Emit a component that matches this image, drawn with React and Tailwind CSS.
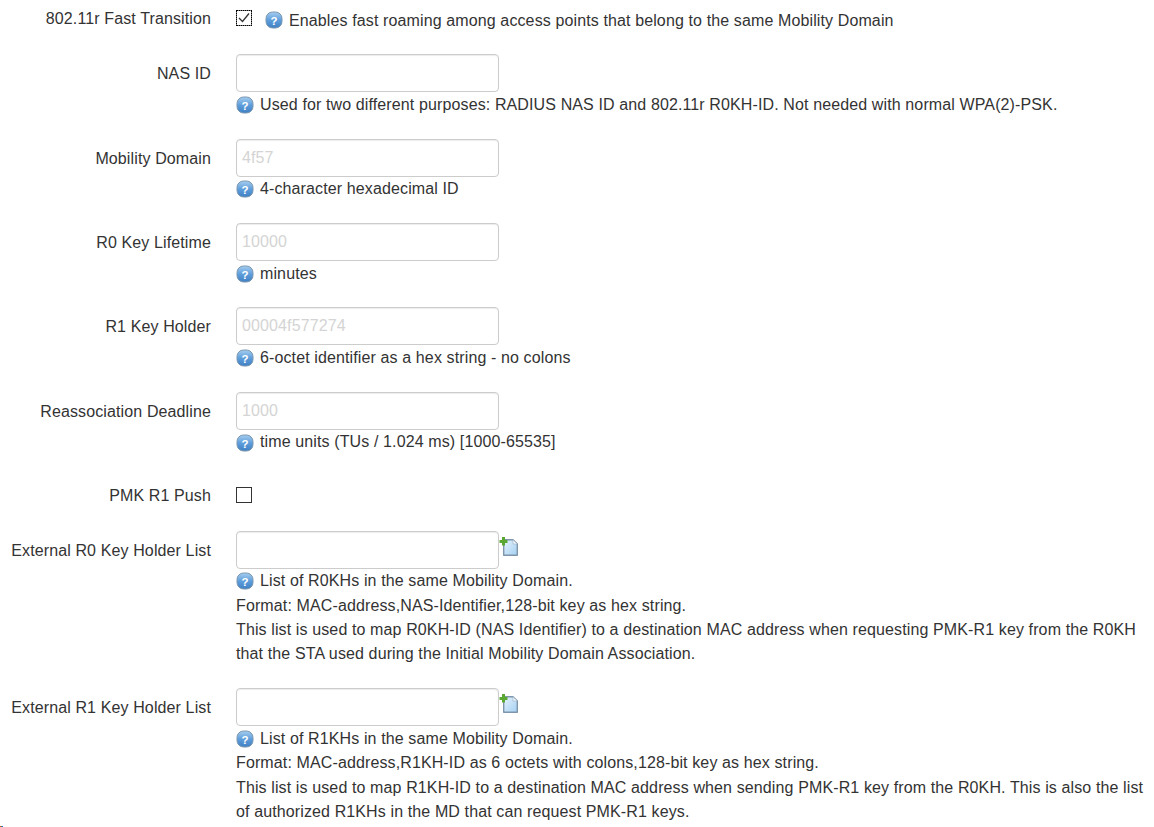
const Help = ({ className = "" }) => (
  <svg viewBox="0 0 18 18" className={`w-[18px] h-[18px] shrink-0 ${className}`}>
    <defs>
      <linearGradient id="hg" x1="0" y1="0" x2="0" y2="1">
        <stop offset="0" stopColor="#a5cdf0" />
        <stop offset="0.5" stopColor="#5f9edb" />
        <stop offset="1" stopColor="#3f80c4" />
      </linearGradient>
    </defs>
    <rect x="1" y="1" width="16" height="16" rx="6.5" fill="url(#hg)" stroke="#7b97b0" strokeWidth="1" />
    <text x="9" y="13.5" textAnchor="middle" fontSize="11.5" fontWeight="700" fill="#fff" fontFamily="Liberation Sans, sans-serif">?</text>
  </svg>
);

const AddIcon = () => (
  <svg viewBox="0 0 20 20" className="w-5 h-5 shrink-0 mt-[6px]">
    <defs>
      <linearGradient id="ag" x1="0" y1="0" x2="1" y2="1">
        <stop offset="0" stopColor="#e6f3fd" />
        <stop offset="1" stopColor="#a4d0f2" />
      </linearGradient>
    </defs>
    <path d="M4.7 2.7H14L18.3 7V18.3H4.7Z" fill="url(#ag)" stroke="#7e95aa" strokeWidth="1.4" strokeLinejoin="round" />
    <path d="M14 2.7V7H18.3Z" fill="#f4faff" stroke="#9ab0c3" strokeWidth="0.6" />
    <path d="M3 0H6V3H8.5V6H6V8.5H3V6H0.5V3H3Z" fill="#5aa832" />
  </svg>
);

const Input = ({ placeholder }) => (
  <input
    readOnly
    placeholder={placeholder}
    className="block w-[263px] h-[38px] px-[5px] rounded-[4px] border border-[#cccccc] bg-white shadow-[inset_0_1px_1px_rgba(0,0,0,0.075)] outline-none placeholder:text-[#d4d4d4]"
  />
);

const Checkbox = ({ checked, focused }) => (
  <span className={`flex items-center justify-center w-4 h-4 bg-white border ${focused ? "border-[#777] outline outline-dotted outline-black -outline-offset-1" : "border-[#333]"}`}>
    {checked && (
      <svg viewBox="0 0 14 14" className="w-[14px] h-[14px]">
        <path d="M2 7L5.5 10.5L12 2.5" fill="none" stroke="#333" strokeWidth="1.3" />
      </svg>
    )}
  </span>
);

const Label = ({ children, className = "" }) => (
  <div className={`w-[211px] shrink-0 text-right ${className}`}>{children}</div>
);

const Hint = ({ lines }) => (
  <div>
    {lines.map((l, i) => (
      <div key={l} className="flex items-center h-[24.48px] pt-[1.08px] whitespace-nowrap">
        {i === 0 && <Help className="mr-[6px]" />}
        {l}
      </div>
    ))}
  </div>
);

const Field = ({ label, placeholder, hint, add }) => (
  <div className="flex gap-[25px] mb-[22px]">
    <Label className="h-[38px] leading-[39.08px]">{label}</Label>
    <div>
      <div className="flex">
        <Input placeholder={placeholder} />
        {add && <AddIcon />}
      </div>
      <Hint lines={hint} />
    </div>
  </div>
);

export default function App() {
  return (
    <div className="relative w-[1154px] h-[827px] overflow-hidden bg-white text-[#333333] text-[16px] tracking-[0.12px] leading-[24.48px] font-['Liberation_Sans',Arial,sans-serif]">
      <div className="flex gap-[25px] h-[32.06px] mb-[22px]">
        <Label className="pt-[7px]">802.11r Fast Transition</Label>
        <div className="flex items-center h-[20px] mt-[10px]">
          <span className="self-start"><Checkbox checked focused /></span>
          <Help className="ml-[13px] mr-[6px]" />
          <span className="pt-[2px]">Enables fast roaming among access points that belong to the same Mobility Domain</span>
        </div>
      </div>
      <Field label="NAS ID" hint={["Used for two different purposes: RADIUS NAS ID and 802.11r R0KH-ID. Not needed with normal WPA(2)-PSK."]} />
      <Field label="Mobility Domain" placeholder="4f57" hint={["4-character hexadecimal ID"]} />
      <Field label="R0 Key Lifetime" placeholder="10000" hint={["minutes"]} />
      <Field label="R1 Key Holder" placeholder="00004f577274" hint={["6-octet identifier as a hex string - no colons"]} />
      <Field label="Reassociation Deadline" placeholder="1000" hint={["time units (TUs / 1.024 ms) [1000-65535]"]} />
      <div className="flex gap-[25px] h-[32.16px] mb-[22px]">
        <Label className="pt-[8px]">PMK R1 Push</Label>
        <div className="mt-[10.5px]"><Checkbox /></div>
      </div>
      <Field
        label="External R0 Key Holder List"
        add
        hint={[
          "List of R0KHs in the same Mobility Domain.",
          "Format: MAC-address,NAS-Identifier,128-bit key as hex string.",
          "This list is used to map R0KH-ID (NAS Identifier) to a destination MAC address when requesting PMK-R1 key from the R0KH",
          "that the STA used during the Initial Mobility Domain Association.",
        ]}
      />
      <Field
        label="External R1 Key Holder List"
        add
        hint={[
          "List of R1KHs in the same Mobility Domain.",
          "Format: MAC-address,R1KH-ID as 6 octets with colons,128-bit key as hex string.",
          "This list is used to map R1KH-ID to a destination MAC address when sending PMK-R1 key from the R0KH. This is also the list",
          "of authorized R1KHs in the MD that can request PMK-R1 keys.",
        ]}
      />
      <div className="absolute left-0 bottom-0 flex h-px">
        <span className="w-px bg-[#e23b3b]" />
        <span className="w-px bg-[#3aa53a]" />
        <span className="w-px bg-[#3b4fd8]" />
      </div>
    </div>
  );
}
